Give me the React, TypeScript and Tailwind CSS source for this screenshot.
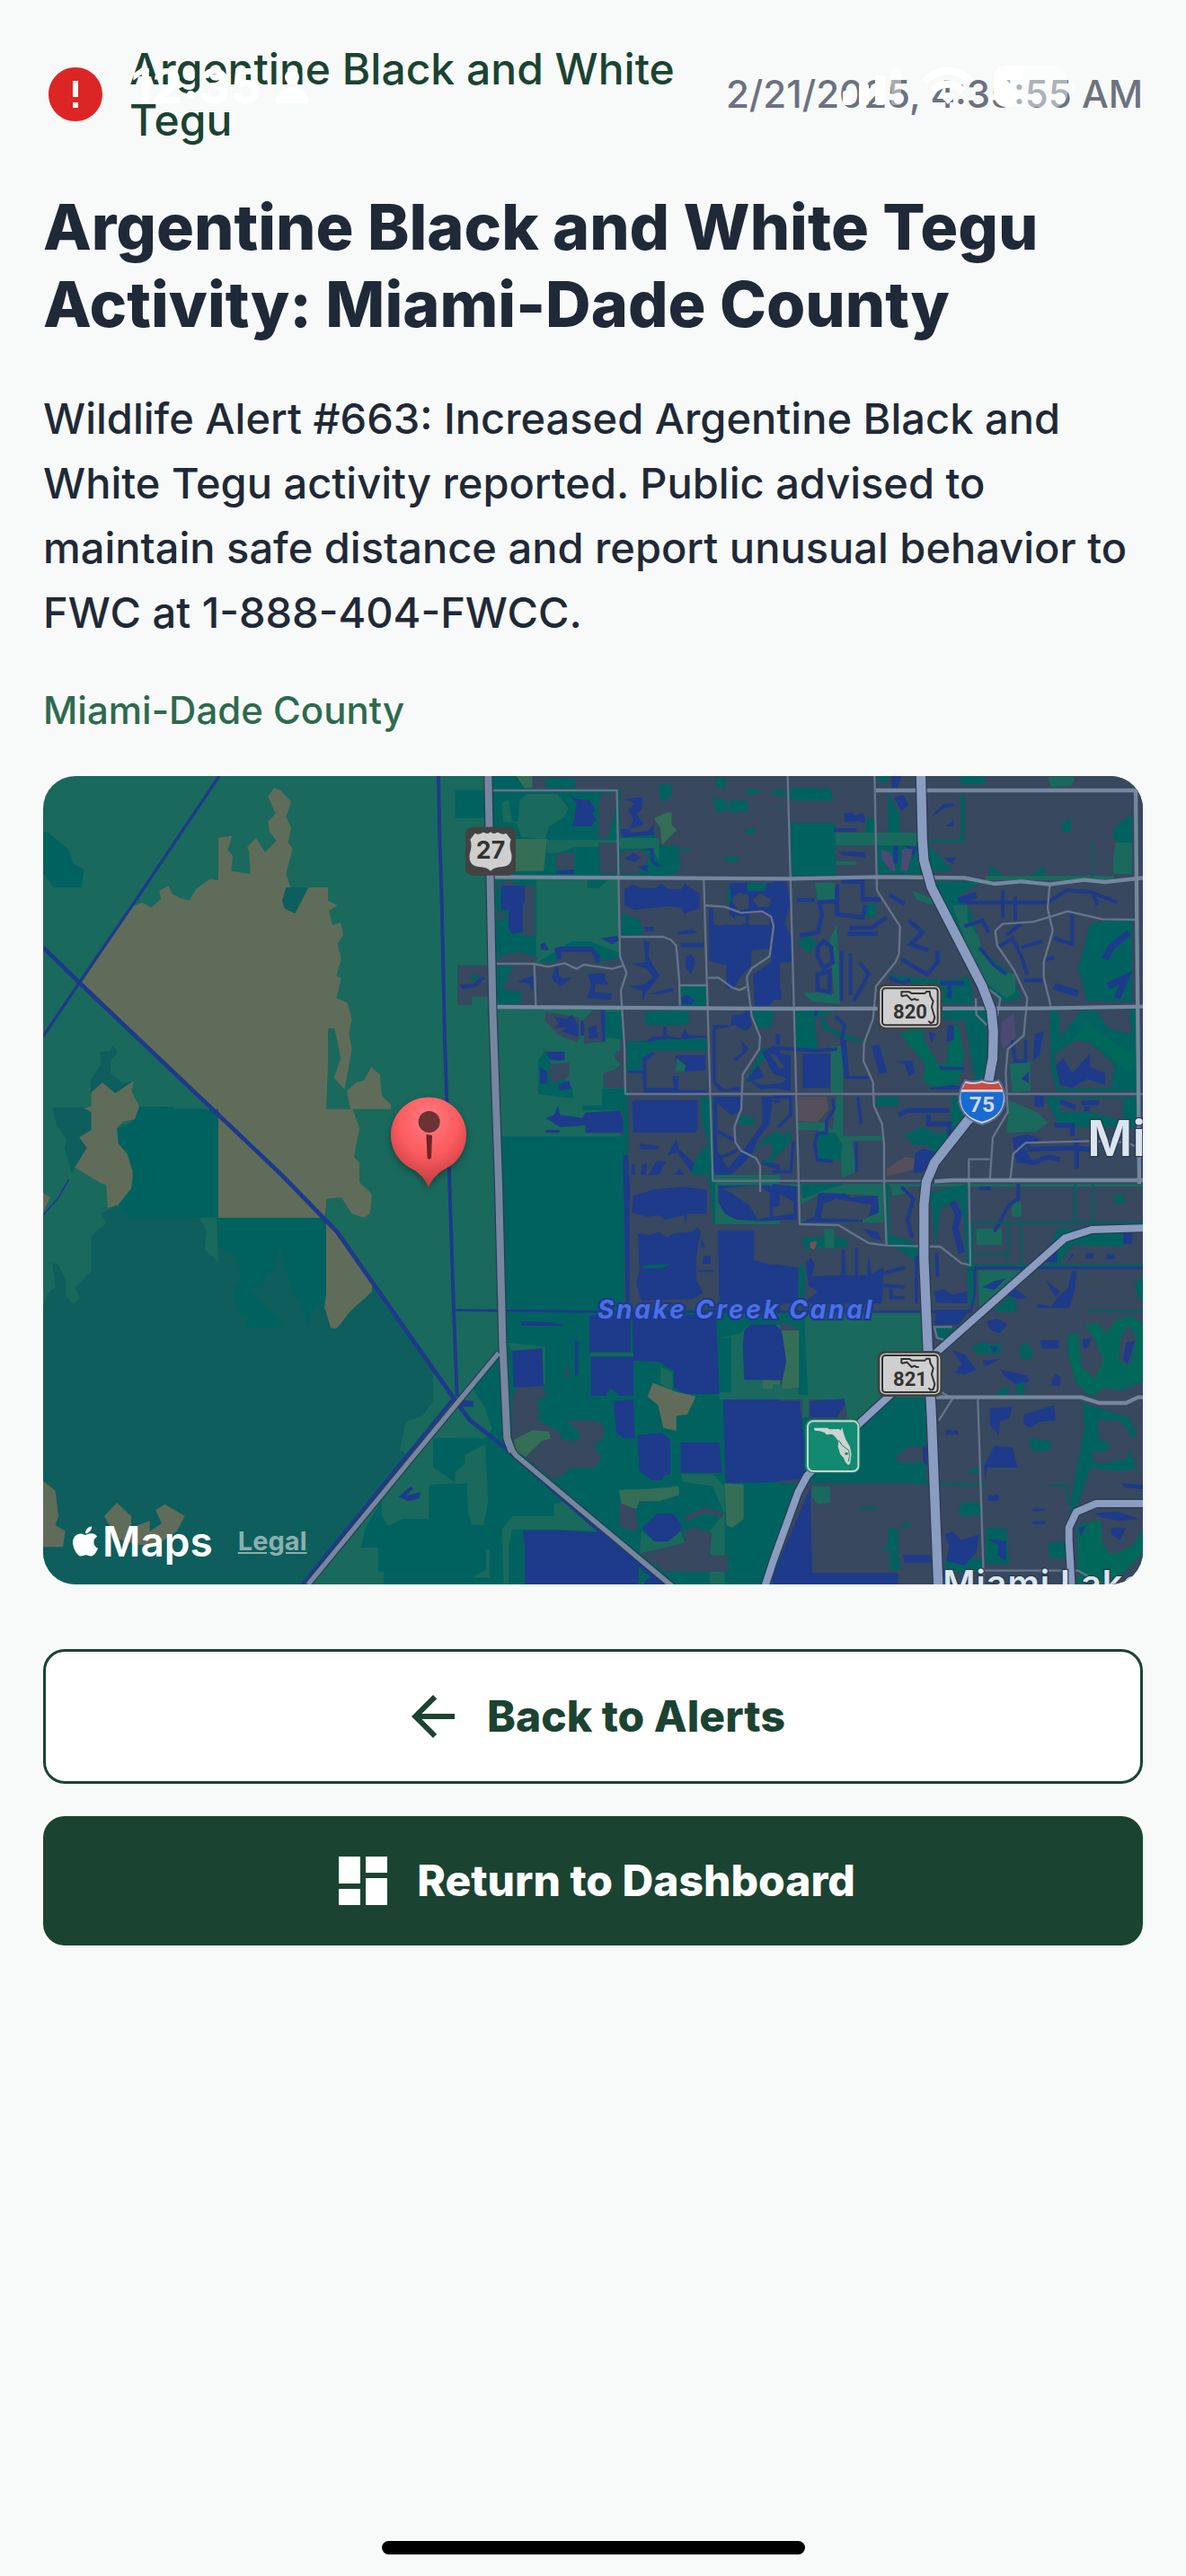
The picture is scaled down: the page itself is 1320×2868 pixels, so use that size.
import { FaApple } from 'react-icons/fa';
import { MdArrowBack, MdDashboard, MdError } from 'react-icons/md';

const alert = {
  species: 'Argentine Black and White Tegu',
  time: '2/21/2025, 4:35:55 AM',
  title: 'Argentine Black and White Tegu Activity: Miami-Dade County',
  message:
    'Wildlife Alert #663: Increased Argentine Black and White Tegu activity reported. Public advised to maintain safe distance and report unusual behavior to FWC at 1-888-404-FWCC.',
  county: 'Miami-Dade County',
};

// Land cover
const PARK = '#1a695d';
const TEAL = '#00625f';
const MARSH = '#0e5e5e';
const DRY = '#606c5a';
const CITY = '#37485f';
const WATER = '#1e3a8a';
const FIELD = '#356e57';
const GOLF = '#00685a';
const PURPLE = '#4c4a74';
const BROWN = '#554e5b';

// Roads
const CASING = '#2b3a50';
const MINOR = '#66738b';
const MAJOR = '#75879f';
const HIGHWAY = '#8a9cc0';

interface Tile {
  x: number;
  y: number;
  areas: [string, string][];
  lines?: [string, number, string][];
}

const tiles: Tile[] = [
  // north west
  {
    x: -24,
    y: -18,
    areas: [
      [DRY, 'M153 708 190 650 320 455 355 440 385 458 418 428 412 402 442 385 455 412 480 425 512 434 535 395 580 362 609 366V224L655 218 640 265 657 285 652 335 716 345 712 275 706 255 735 225 765 273 803 235 780 205 775 170 800 143 775 88 795 58 815 65 852 103 835 155 852 190 842 240 857 262 835 345 850 390H975V435L1007 450 978 468 990 515 1018 508 1026 550 1007 578 1019 630 1003 685 1019 695 1003 760 1040 775 1055 830 1045 880 1055 930 1030 1065 995 1025 1018 960 997 860H975V990L969 1130H1058L1080 1195 1062 1290 1080 1310V1380H609V1160L330 890Z'],
      [DRY, 'M1038 1070 1070 1040 1095 1035 1120 990 1148 1015 1155 1085 1185 1115V1130H1050Z'],
      [MARSH, 'M835 390H910L865 478 830 460 822 435Z'],
      [TEAL, 'M24 205H40L110 265 125 310 160 330 152 390H60L24 345Z'],
      [MARSH, 'M183 1075V1030L215 985V938H245L255 920 275 938 248 970 250 1010 290 1045 328 1035 300 1075Z'],
      [MARSH, 'M55 1125H185V1200L145 1225 170 1260 130 1325 120 1345 95 1260 105 1235 70 1185Z'],
      [TEAL, 'M340 1123H460V1130H609V1380H318L275 1245 270 1195 320 1175Z'],
      [DRY, 'M185 1075 222 1042 265 1078 328 1035 318 1070 345 1120 330 1165 290 1172 270 1195 275 1245 305 1280 323 1340 318 1380H220L130 1325 170 1260 145 1225 185 1200V1140L160 1127 185 1122Z'],
    ],
  },
  // south west
  {
    x: -24,
    y: 1332,
    areas: [
      [MARSH, 'M24 1368V440L40 395 65 375 55 295 75 300 100 355V405L125 432 147 410 130 378 185 320V205L235 160 218 130 265 105H290L305 143H969L1122 365 1326 640V755L1290 805 1235 825 1215 920 1240 935 895 1368Z'],
      [TEAL, 'M603 143H969V430L935 435 905 505 885 430 860 400 815 240 790 325 770 330 755 370 712 380 760 430 825 490 800 512H695L710 465 680 470 657 390 680 360V310L655 255 640 262 609 235Z'],
      [TEAL, 'M324 0H609V143H305L275 100 320 45Z'],
      [PARK, 'M545 143H603L609 290 563 250 570 190Z'],
      [DRY, 'M609 0H1080V25L1122 65 1115 130 1095 143 1055 130 1020 75 969 80V105L963 143H609Z'],
      [DRY, 'M969 143 1005 190 1122 365V390L1050 455 1005 512H985L963 440 969 400Z'],
      [DRY, 'M180 0H324L318 45 275 100 240 110 235 35Z'],
      [DRY, 'M24 60 48 75 24 125Z'],
      [DRY, 'M24 1022 65 1055 75 1140 65 1170 98 1190 90 1243H24Z'],
      [DRY, 'M228 1140 270 1095 318 1140V1180L380 1155V1190L420 1165 400 1120 430 1100 497 1140 470 1190 400 1240 340 1235 270 1215Z'],
      [PARK, 'M1240 935 1100 1100 1155 1085V1200L1000 1260 1060 1368H1326V880Z'],
      [TEAL, 'M1326 880H1400V1368H1162V1325H1143V1245H1085L1100 1180 1155 1085V1140L1175 1172 1225 1150H1314V1035L1400 1030 1326 975Z'],
      [WATER, 'M1210 1075 1250 1042 1260 1048 1235 1072 1283 1060 1280 1080 1245 1090Z'],
    ],
  },
  // north centre
  {
    x: 1236,
    y: -18,
    areas: [
      [CITY, 'M690 18H1260V1380H690Z'],
      [TEAL, 'M140 65H240V158H140Z'],
      [TEAL, 'M262 18H690V350H262Z'],
      [FIELD, 'M345 18H398V58H370Z'],
      [CITY, 'M398 18H690V62H398Z'],
      [TEAL, 'M442 58V25H540V60Z'],
      [PARK, 'M295 110 318 95 330 170 350 170 355 100 380 78H480L518 125 505 155 455 185 440 228 360 222 345 175 300 170Z'],
      [FIELD, 'M342 228H447L435 335H342Z'],
      [PARK, 'M447 232H690V255H540L480 275H447Z'],
      [CITY, 'M477 275H537V330H477Z'],
      [CITY, 'M618 105 630 75H680L675 130 650 225H618ZM618 240H680V345H625Z'],
      [WATER, 'M477 335 537 330V345H477Z'],
      [WATER, 'M522 80 545 95 590 100 607 130 597 145 610 160 597 185H530L540 150 545 110Z'],
      [TEAL, 'M690 225 800 195 825 250H888V335L855 350H690Z'],
      [PARK, 'M690 225H820V305L800 260H690Z'],
      [CITY, 'M692 270 760 262 790 290 750 345H692Z'],
      [WATER, 'M705 95 765 88 762 130 745 145 770 180 720 195 735 165 718 130 740 110ZM690 195H720L725 208 785 200 803 178V215L700 222Z'],
      [FIELD, 'M803 160 845 140H863L862 180 880 198 830 248 825 190Z'],
      [WATER, 'M705 295 735 275 760 290 740 305ZM765 262 803 258V300L828 318 815 322 795 305 792 268ZM750 320 785 315 780 340Z'],
      [TEAL, 'M820 45H862V80L840 100H822ZM1012 25H1042V60L1012 55ZM1000 90 1048 100V138H1012ZM1056 100H1116V138H1056ZM1110 63H1152V81H1110ZM1205 63H1260V81H1205ZM1110 192H1140V210H1112ZM1040 287H1085V303H1040ZM900 257H938L910 268H900ZM1212 118 1260 108V138Z'],
      [TEAL, 'M275 365H410V640H275ZM582 365H650L620 392H582ZM528 570H590L690 610V640H415L480 600Z'],
      [CITY, 'M275 385 320 365 348 385H405V550H365V390H275ZM282 465 315 490 282 500Z'],
      [WATER, 'M293 385H372V440L365 445V540L330 545 318 530V465H293Z'],
      [CITY, 'M290 620 350 605 418 625 400 645 480 640 490 605 590 600 615 640 690 625V785H275V645Z'],
      [TEAL, 'M278 650H335L298 730 360 740V780H275Z'],
      [WATER, 'M470 595 490 588H595L622 615V640H610L595 605H495V630H482ZM625 560 680 552 690 565 665 580ZM425 580 437 573 453 600 427 598Z'],
      [WATER, 'M462 690 475 655 485 660V680L500 695 530 690 495 720 470 705ZM582 680 640 675V700L655 715 610 712 605 740 665 745 660 765 580 760 595 715ZM345 705 400 685V740L385 710Z'],
      [CITY, 'M148 650H250V755H195V783H148Z'],
      [TEAL, 'M190 682H215V700H195Z'],
      [WATER, 'M155 715 200 712 230 685 237 695 210 722 165 730Z'],
      [WATER, 'M705 395 735 380 755 392H810L828 378 850 395H895L905 378 955 410V460L905 478 895 458 850 452 740 465 705 450Z'],
      [TEAL, 'M695 475 758 500 765 550H695ZM893 720H978V785H893ZM775 805 920 800V850H775Z'],
      [WATER, 'M770 522H803V536H775ZM878 540 930 530 950 542 890 548ZM893 575H970V590H893ZM910 620 930 612 942 640 928 680 910 660Z'],
      [WATER, 'M770 565 788 575 785 620 800 650 822 685 775 745 765 770V735L720 720 770 715 800 690 780 662 730 645 775 640ZM790 745 865 725 870 735 820 748ZM895 755 915 750 940 768 930 780H898Z'],
      [WATER, 'M988 455 1000 460 1005 515H1190V595L1130 600 1128 650 1090 690 1070 728H1045V650L988 635Z'],
      [WATER, 'M1055 375H1260V640H1195L1190 490 1165 475H1120V520H1105L1055 480Z'],
      [CITY, 'M1062 430 1085 408 1120 415V460L1085 470ZM1133 430 1160 410 1195 430 1190 455 1150 455ZM1008 470 1050 462 1056 510 1020 520ZM1073 485H1110V510L1085 515ZM1128 480H1160L1155 510 1130 512Z'],
      [TEAL, 'M1115 375H1180L1175 402H1115ZM1050 395H1060V440H1045Z'],
      [WATER, 'M1135 680 1200 635H1260V735H1225L1190 785H1140Z'],
      [CITY, 'M440 805 500 815 555 825V895L545 908 480 880 440 835ZM570 830 600 800H640V905L570 912Z'],
      [WATER, 'M470 820 510 830 530 815 550 850V890L495 870 520 855 470 860 485 845ZM558 835H570V885H558ZM585 860 610 850 618 890 585 895ZM625 800H641V905H630Z'],
      [TEAL, 'M641 805H697L705 900 641 890ZM417 965 440 935 460 980 530 1060 533 1095 417 1080Z'],
      [CITY, 'M455 980 520 975V1020L470 1045 455 1020ZM635 1010 670 1000 695 980 670 960 680 935 705 940V1060H635Z'],
      [WATER, 'M440 938H505V968H475L455 965ZM423 990 447 1005V1045H423ZM485 1050 520 1035 528 1062 488 1068Z'],
      [TEAL, 'M565 1118H630V1062H718V1225H700V1135H565ZM295 1222H718V1380H297Z'],
      [WATER, 'M442 1160 470 1150 483 1118 490 1150 565 1160 575 1142 690 1135 700 1170V1210H575V1185L490 1190ZM442 1200H488V1210H442Z'],
      [TEAL, 'M712 905 800 900 880 895H980V935H800L765 960 760 1005H712Z'],
      [WATER, 'M712 903H780L800 888H835V855H845V885L895 893 905 860 920 885H978V892L880 898 845 895 790 905Z'],
      [WATER, 'M765 960 800 938 805 948 778 970V1060H870L865 1020H885V1065L980 1068V1078H770L765 1010H718V1002H765ZM875 950H975V1000L905 1005 880 990Z'],
      [PARK, 'M880 960 910 985 905 1005 875 1005Z'],
      [WATER, 'M730 1105 740 1100H950V1200L940 1208H735Z'],
      [TEAL, 'M958 1090H1000V1380H920L940 1300 985 1245 962 1170Z'],
      [WATER, 'M755 1245 820 1255 815 1265H760ZM848 1285 878 1230 888 1265 938 1310 930 1340 880 1275ZM702 1285H718V1380H700ZM730 1315H740V1370H755L765 1315 780 1312 775 1370 810 1305 845 1305 800 1380H725ZM840 1380 890 1330 920 1370 900 1380Z'],
      [TEAL, 'M1130 800H1205L1195 855 1150 860ZM1110 1040 1165 925 1200 935 1150 990Z'],
      [WATER, 'M1000 850 1060 850 1065 815H1090L1120 800 1130 850 1110 870 1075 850 1010 865V1040L1040 1065 1090 1055V1070H1020L1000 1040ZM1065 965 1100 940 1095 900 1120 930 1080 970Z'],
      [WATER, 'M1165 940 1200 920 1260 940V950L1190 945 1225 1000 1260 1010V1030L1200 1010ZM1115 1030 1165 1050 1260 1040V1055L1160 1065ZM1210 880H1260V915H1210ZM1110 1040 1150 985 1170 1020 1155 1030Z'],
      [WATER, 'M1003 1090H1095L1090 1140 1060 1150 1015 1110V1270L1065 1350H1150L1260 1355V1365H1010L1003 1330ZM1165 1090H1200L1190 1180 1150 1230 1130 1285 1060 1350 1050 1330 1100 1270 1165 1180Z'],
      [WATER, 'M1020 1200 1075 1230 1070 1240 1015 1210ZM1020 1290 1080 1262 1085 1272 1020 1300ZM1195 1100H1260V1110H1205ZM1170 1300 1230 1320 1225 1335 1165 1315Z'],
      [TEAL, 'M1085 1150 1138 1160V1185H1090ZM1130 1280 1170 1230 1260 1180V1240L1190 1310H1165L1240 1250 1170 1245Z'],
    ],
  },
  // south centre
  {
    x: 1236,
    y: 1332,
    areas: [
      [TEAL, 'M295 0H1260V1368H0V1150H52V1040L180 1030 183 1120 195 1170 235 1170 250 1090 240 900 172 935V965L120 1008 66 970V880H240L150 770 280 605 290 600Z'],
      [PARK, 'M150 770 190 700 240 780 262 850 240 880Z'],
      [MARSH, 'M0 545 66 640V755L30 805 0 815Z'],
      [CITY, 'M705 0H985L1003 165H1260V310H1140V290H1025V450H705Z'],
      [WATER, 'M702 0H722V450H710ZM735 70 800 50 900 40 980 50V130H915L910 165 905 135 840 150 820 135 780 140 730 125Z'],
      [WATER, 'M750 195 790 200 820 190 845 210 870 195 930 190 950 175 960 190 945 270V350L968 395 930 415 760 420 745 360 755 320ZM960 210 975 240 962 245ZM970 270H992V298H965ZM950 319H1005V325H950Z'],
      [TEAL, 'M765 302 860 298 830 312H770Z'],
      [PARK, 'M1008 0H1260V165H1008Z'],
      [WATER, 'M1018 35H1260V150L1170 155 1080 150 1040 130 1018 90Z'],
      [CITY, 'M1030 45 1150 35 1190 60V140L1150 150 1120 100 1060 60ZM1215 40H1260V85L1225 70ZM1200 110 1260 90V150H1200Z'],
      [WATER, 'M1017 185H1138V285L1215 305H1260V452H1022Z'],
      [WATER, 'M588 470 725 465V592H588ZM730 460 1010 470 1018 640 1022 732H910L870 710V655L820 625 735 620ZM593 608H735V738H690L655 712 645 738H593ZM668 755 735 750 740 880H700L678 860Z'],
      [PARK, 'M593 595H735V605H593ZM825 640 865 660V720L825 700Z'],
      [WATER, 'M748 870 830 862 858 885V1000L835 1005 830 1020H795L755 990ZM893 893H1022L1030 995H893Z'],
      [PARK, 'M1022 545 1090 530 1120 500H1260V750H1022V727H1062V545Z'],
      [FIELD, 'M1227 520H1260V715H1167V686H1235L1245 630Z'],
      [WATER, 'M1035 750H1260V1022L1165 1028H1042ZM1100 570 1105 520 1125 500H1210L1227 520 1245 630 1235 685H1105Z'],
      [DRY, 'M782 740 800 695 880 725 943 740 915 800 878 805V855L835 845 818 770Z'],
      [PARK, 'M315 560 440 575V700H430V580L330 588Z'],
      [WATER, 'M330 588 430 580 435 705 400 718 336 710ZM360 490 450 492 500 500V505L360 503ZM540 555H550V670H540Z'],
      [CITY, 'M508 640H520V675H508Z'],
      [CITY, 'M330 740 345 710 430 705 447 740 415 750 420 820 490 860 495 885 550 888 555 860 510 820 610 820 640 845 630 885 605 900 628 950 605 978H530L470 1020 375 945 330 880Z'],
      [FIELD, 'M335 885 400 852 455 858 458 883 430 888 375 942 345 925Z'],
      [PARK, 'M330 1140H470V1100L520 1085 620 1190 490 1185H330L318 1240V1368H302L295 1185ZM195 1345 242 1320V1250H255V1345Z'],
      [WATER, 'M366 1187H490L620 1195 752 1305V1368H372V1240Z'],
      [FIELD, 'M687 1052 775 1050 887 1040V1070L820 1090H755L745 1115H697Z'],
      [CITY, 'M687 1095 740 1115 752 1180 735 1192 690 1175Z'],
      [PARK, 'M895 1000H1000L1040 1040V1368H990V1190L1038 1130 1000 1040 900 1025ZM763 1190 805 1225 893 1190 905 1230 755 1265Z'],
      [WATER, 'M763 1180 815 1132H870L893 1165V1190L850 1225H805Z'],
      [CITY, 'M755 1265 905 1230V1185L940 1178 998 1195 990 1270 1050 1272V1325H840ZM905 1140 975 1110 1038 1130 1030 1145 975 1130 915 1158Z'],
      [FIELD, 'M1040 1030 1103 1035V1150L1065 1178 1045 1170Z'],
      [WATER, 'M1200 1368 1260 1200V1368ZM775 1355 795 1345 830 1368H770ZM130 750 200 755V775H150Z'],
    ],
  },
  // north east
  {
    x: 2436,
    y: -18,
    areas: [
      [CITY, 'M24 18H1240V1380H24Z'],
      [TEAL, 'M60 175H210V350H62ZM55 58H190L203 100H58ZM0 65H45V82H0ZM345 18H395L370 45ZM310 160H345V210H310ZM385 70 410 120 425 150V210H385ZM350 240H490L500 345H350ZM505 230 600 335H530ZM525 230H628V80H640V240H525ZM628 18H708V46H628Z'],
      [PARK, 'M210 207H480V250H210ZM210 303H280V315H210ZM918 20H1008L1000 50 930 55ZM710 352H1140V366H710Z'],
      [WATER, 'M238 143 260 140 275 150 300 142 310 160 305 175 285 168 240 172ZM205 192H280V204H205ZM220 270 310 272V290L230 282ZM403 250H418V310H403ZM435 250 485 255 470 290 455 262ZM398 18H430L415 60H398ZM405 90 435 80 455 115 430 135Z'],
      [PURPLE, 'M362 262 395 275 412 335H395L365 295ZM432 262H468L450 335 427 330Z'],
      [WATER, 'M532 150 570 112 605 108V117L570 125 540 150ZM578 185 605 165V188ZM570 290 612 292 600 312Z'],
      [TEAL, 'M965 180 995 155V205H968ZM1137 225 1140 190 1200 145V240L1155 240ZM1065 240H1070V355H1065ZM725 315 770 350H725ZM860 350 908 318V350Z'],
      [PARK, 'M1145 240H1200V345H1137V300Z'],
      [WATER, 'M0 370H45L60 440 40 510 65 560V640H0ZM0 730H28V765H0Z'],
      [TEAL, 'M540 370H700L620 420 660 470 700 600 800 680 830 760 760 775 700 700 600 500ZM1060 510 1200 490V770H1050L1020 660ZM80 575 120 550 150 575 120 610ZM300 450 345 440V490H310ZM380 680 560 700 660 690 670 780H570L440 720Z'],
      [PARK, 'M600 450H650V500L690 560 700 600 760 670 810 680V740L780 760 700 700 640 560ZM140 375H210V430L150 435ZM190 560 215 515 225 780 130 770 100 740 205 745ZM465 400 540 430 530 450 480 430Z'],
      [TEAL, 'M70 800H210L140 830 150 930H72ZM160 805 190 860 240 880 300 900V910L230 895 165 860ZM345 800H715V1060H680L640 830 430 870Z'],
      [CITY, 'M430 830 600 830 610 1040 480 1060 410 960Z'],
      [GOLF, 'M425 880 500 850 505 900 540 960 600 900 605 850H620L640 950 620 1050 550 1060 500 1040 510 980Z'],
      [CITY, 'M545 900 585 920 580 980 545 980Z'],
      [PARK, 'M195 920H235V1080H195Z'],
      [WATER, 'M100 945H192V1055L185 1060H100ZM225 900H245L255 1020H320V1030H240ZM330 920 355 915 382 1010H355ZM410 970H465L475 1010 455 1020 440 980ZM520 1060 600 1050 680 1065H530ZM555 985 580 990H640V1000H560ZM520 870 545 880 530 910ZM585 850H605V900L580 905ZM0 940 60 950V1070L0 1060 50 1030 0 1010 40 990Z'],
      [PARK, 'M790 980 860 970V1070L800 1075Z'],
      [PURPLE, 'M765 840 805 810 812 890 770 930 762 900Z'],
      [TEAL, 'M925 800H1225V1070H950L930 1000Z'],
      [CITY, 'M955 800H1030L960 890ZM1080 800H1190L1200 880 1120 860Z'],
      [GOLF, 'M970 930 1030 870 1040 820 1060 850 1130 900 1210 950 1200 1010 1160 990 1060 890Z'],
      [CITY, 'M940 950 1010 900 1060 910 1140 980 1130 1060H960Z'],
      [WATER, 'M945 985 970 960 1000 1010 1060 945V990L1110 1010V1050L1050 1030 1000 1060 960 1050ZM875 880 905 870 890 950 870 970ZM830 1030 855 1005V1045Z'],
      [PARK, 'M85 1175H170L200 1200 215 1085H235V1220H370V1235H265L280 1340 230 1360 225 1250 150 1200H85Z'],
      [BROWN, 'M85 1088H180L187 1130 150 1175 85 1170Z'],
      [TEAL, 'M150 1210H210L232 1250 225 1300H150ZM345 1090H420V1120H345ZM600 1085 640 1100V1180L540 1290 510 1230 590 1200ZM440 1215 500 1190 560 1220 550 1250H470ZM910 1090H1225V1190H960ZM0 1240 60 1200V1240L0 1300Z'],
      [CITY, 'M960 1095H1170V1170L1060 1140H960Z'],
      [PARK, 'M790 1100 880 1140 920 1175 880 1205 780 1210Z'],
      [BROWN, 'M380 1330 440 1290 475 1295V1330L380 1355Z'],
      [WATER, 'M475 1280 500 1262 570 1280 500 1340 470 1345ZM800 1225 850 1215 900 1230 840 1260 870 1310 815 1310ZM875 1085H905V1123H875Z'],
    ],
    lines: [
      [WATER, 14, 'M80 432H140M155 440 165 480 150 540 90 550M215 380V480L300 490 310 450M230 370H300V430H360M150 440 220 435M250 545H350M255 525H330L380 490M390 415 440 445M455 500 500 540 460 580 520 600M430 630 480 660 515 680 550 640V600M390 690 430 710 460 700M560 710H640M590 710V760M150 590 170 570 195 590 200 640 170 660 150 620ZM150 680 190 670V740L150 730Z'],
      [WATER, 12, 'M230 600V770M260 610V750M290 640 320 680 270 770M640 440H920M768 400V490M810 420V500M920 440 980 400 1060 405 1150 440M1070 410 1085 450M1000 470V580L940 560M780 550 830 510M640 520 700 500 720 540M750 590 800 560 830 620 850 680M690 590 740 650 780 680M830 590 900 570M910 630 940 625M840 700H900'],
      [WATER, 22, 'M620 435 680 415M1110 630 1130 590 1190 540M940 720 1020 745M1120 720 1180 690 1150 760'],
      [WATER, 11, 'M0 925 140 935 215 930M150 800 140 820M210 820 240 850 230 900M800 900 810 970H845V900M200 1095 205 1130 180 1170V1210H150L140 1250 150 1300 200 1305M285 1090 295 1180M280 1240V1340M0 1090H60V1150L20 1190M0 1340H60L70 1240'],
      [WATER, 16, 'M420 1150 450 1135H590M520 1150V1180H590V1220M960 1105 1010 1125M1030 1110H1090M1040 1130H1060M940 1185H1000V1220M850 1265 1010 1260 1080 1270M1015 1230V1330M830 1300 870 1310 920 1290 960 1300'],
    ],
  },
  // south east
  {
    x: 2436,
    y: 1332,
    areas: [
      [CITY, 'M24 40H1240V1368H24Z'],
      [PARK, 'M105 455H495L540 590V745H380L290 815H250L240 750H120V810H100V750H0V700H100Z'],
      [TEAL, 'M0 452H105L118 735H85L88 520 60 500 0 490ZM100 810 290 840 405 745H512V1030H0V1368L90 1030Z'],
      [FIELD, 'M27 520H88V710L32 715V685L45 630Z'],
      [WATER, 'M0 500 30 520 45 620 32 685H0ZM0 755H90L105 890V1015L0 1025ZM125 755 240 748V770L215 810H125ZM0 1340 125 1045 132 1330H418V1368H0Z'],
      [PARK, 'M132 1040H192V1095L150 1100 130 1075Z'],
      [CITY, 'M415 940 450 908 510 905V960H415Z'],
      [PARK, 'M95 30H370V160H95ZM395 30H440L460 60 400 70Z'],
      [TEAL, 'M95 30H240L150 60 100 80ZM375 30H390V200L460 220 490 250V300L440 260 380 230ZM525 60 650 30V200L620 80 560 110 545 240ZM640 170 670 160V440H655Z'],
      [CITY, 'M95 100 160 60 350 70 355 125 300 150H95Z'],
      [WATER, 'M155 60 240 62 260 75 350 70 355 125 320 140 330 100 210 80 170 95 160 145 300 150V158H95L140 140ZM0 30 80 40V150H0V140L70 130V90L0 50ZM300 180 350 190 365 220 330 210Z'],
      [TEAL, 'M95 210 200 205 250 215V240L110 250ZM90 290 110 320 105 440H85Z'],
      [PARK, 'M170 180H205V245H175Z'],
      ['#7a4f5b', 'M125 225 148 222 140 250 125 245Z'],
      [WATER, 'M110 290 130 275 140 300 130 340 230 335V250H240L245 335H275V245H285V335H315L320 265 330 330 370 310 365 430H100L150 390 120 370ZM0 298 85 310V430H0Z'],
      [WATER, 'M540 390 570 382 600 400 650 390V430L590 428 545 425ZM545 450H660L620 500H540Z'],
      [TEAL, 'M540 510H610L560 560ZM735 455 790 405 812 420V458ZM955 175 1100 190H1170V240L1000 235 955 300 900 290ZM1140 65H1173V95H1140ZM1210 360 1240 340V430L1215 400Z'],
      [PARK, 'M685 320H840L690 445ZM680 180H765V235H680ZM795 90H830V140H800Z'],
      [WATER, 'M700 375 740 355 780 345 740 385ZM1170 195H1200V232H1172ZM900 290 950 250V293ZM1045 262H1070V280H1045ZM1115 265H1142V282H1115ZM980 295 1000 262 1005 270Z'],
      [WATER, 'M880 430 930 440 960 400 985 380 1000 320H1015L1010 380 990 445H885ZM910 350 960 390 945 410ZM780 400 810 380 850 410 820 415Z'],
      [WATER, 'M715 490 750 480 785 500 755 530 725 515ZM600 585 640 600 680 650 640 668 610 660 630 630ZM700 620 760 615 710 640ZM760 650 850 670 855 690 820 705 770 670ZM892 552H955V580H900ZM930 690 945 665 960 675V705H932ZM1035 550 1065 545 1050 580H1038Z'],
      [TEAL, 'M665 575 690 562 760 565V598H680ZM825 570 845 560 865 580V615H828ZM750 720 790 705 785 735H752ZM810 700 840 690V735H815Z'],
      [GOLF, 'M1040 500 1085 495 1110 530 1150 480 1200 470 1240 500V690L1160 720 1110 710 1060 740 1010 690 985 590V530H1020L1030 640 1075 680 1105 620 1070 540Z'],
      [CITY, 'M1160 550 1190 500 1215 550 1190 640 1155 620Z'],
      [WATER, 'M1170 620 1180 560 1210 555 1185 630ZM725 570 750 575 740 595Z'],
      [TEAL, 'M1035 760 1060 770 1190 810 1215 870 1200 880 1160 820 1085 820 1090 880 1125 900 1120 920 1060 930 1080 965 1180 950 1190 920 1215 980 1160 990 1060 980 1020 1100 990 1130 1005 1030 1040 850Z'],
      [WATER, 'M725 780 800 775 790 815 760 820 755 870 725 835ZM840 800 905 780 940 770 945 820 890 825 860 845 838 830ZM575 852 620 855V868H580ZM705 975 740 905 800 910 818 978H715L710 1020ZM720 1070 755 1068V1088H718ZM500 910 515 905V970L503 960Z'],
      [TEAL, 'M855 880 935 890 920 925 865 920ZM655 980H695V996H655ZM630 1095H695V1138H620ZM710 1180H780L790 1300H712ZM385 1180H420V1245L425 1320H390V1255L350 1250 385 1240ZM430 1175 445 1157 460 1165 440 1180ZM918 1230 985 1225V1280H925ZM290 1108H345V1117H290ZM575 1280H700V1330H575Z'],
      [WATER, 'M575 1200 600 1190 630 1220 690 1200 680 1260 640 1305 580 1290 590 1240ZM715 1215 780 1225 778 1290 750 1270 755 1240ZM435 1270H525L530 1295H440ZM868 1115H910L905 1123H868ZM868 1157H910V1167H868ZM1160 1030 1240 1035V1050L1180 1045Z'],
      [GOLF, 'M1015 1170 1080 1155H1095L1100 1230 1130 1270 1200 1240 1240 1180V1260L1190 1310 1130 1368H1020Z'],
      [WATER, 'M1075 1130 1150 1125 1225 1150 1160 1155 1100 1145ZM1130 1180H1180L1160 1220 1130 1200ZM1020 1180 1045 1170 1030 1210Z'],
    ],
    lines: [
      [WATER, 12, 'M370 330 440 310M370 370 440 375M395 380V410H440M430 40 470 80 450 150 465 210M480 270V430M690 45H730M820 30V80L790 100 740 190M548 260 550 340'],
      [WATER, 22, 'M600 90 620 130 610 180 632 260'],
      [TEAL, 7, 'M785 160V290M1010 30V160M1068 30V160M670 160H1240M675 265H790M830 165V300M670 302H1240M1055 455H1240M480 1030 710 1035M925 1037H985V1100'],
    ],
  },
];

const canals: [number, string][] = [
  [10, 'M588 0 301 427 121 690 0 870'],
  [14, 'M0 572 121 690 796 1332 981 1522 1356 2057 1376 2087 1426 2152 1550 2250 1856 2520 2080 2710'],
  [12, 'M1320 0 1324 205 1331 420 1341 882 1356 1332 1371 1782 1382 2072'],
  [12, 'M1366 2084 866 2700'],
  [8, 'M1376 1784 1856 1789H3096L3111 1732V1643H3672'],
  [5, 'M86 1347 50 1410 0 1467'],
];

const minorRoads = [
  'M1498 48H1916L1926 602 1948 657 1929 717 1941 902 1944 1062H3672',
  'M2206 347 2236 1352H2936',
  'M2486 0 2522 1330 2526 1497 2656 1500 2756 1560 2816 1568 2996 1572 3066 1627 3096 1634 3091 1332V1280H3160',
  'M2776 0 2784 382 2861 502 2858 592 2846 622 2781 702 2771 812 2741 892 2739 952 2771 1022 2774 1102 2801 1162 2808 1232V1362L2816 1568',
  'M2211 432 2276 437 2331 457 2401 452 2431 470 2439 502 2426 602 2366 642 2349 672 2366 802 2394 872 2391 912 2336 997 2331 1112 2308 1172 2311 1222 2331 1252 2381 1277 2394 1302V1390',
  'M2221 674H2256L2301 707 2326 715 2349 704',
  'M1929 537H2071L2096 547 2114 567 2124 682 2126 767M2126 699H2214',
  'M1514 627H1636L1686 637 1741 625 1781 644 1806 630 1901 644 1941 632M1640 627 1645 765',
  'M3656 480 3536 478 3421 452 3306 487 3204 494 3179 517 3186 567 3241 647 3286 742 3274 867 3221 912 3214 992 3221 1122 3171 1207 3161 1350',
  'M3361 362 3354 442 3371 517 3341 622V672L3364 767',
  'M3229 1352 3239 1262 3281 1225 3496 1219 3620 1224 3672 1250',
  'M3151 707 3196 742 3186 802M3114 742 3116 797 3151 832',
  'M3121 2082 3141 2700M3141 2654H3456L3496 2677',
  'M3036 1840H2976L2984 1876 3010 1884M2996 2056 3036 2080 2991 2152',
];

const majorRoads = [
  'M1486 337 2496 343 2786 337 3076 340 3176 360 3266 352 3361 362 3476 347 3546 354 3672 340',
  'M1501 771 2436 777 3336 776 3672 770',
  'M2781 48H3672',
  'M3648 42 3660 1362',
  'M2976 1354 3036 1350H3672',
  'M2980 2075H3466L3526 2094H3616L3656 2075H3672',
];

const highways: [string, number, string][] = [
  [MAJOR, 16, 'M1521 1927 1236 2272 885 2700'],
  [MAJOR, 17, 'M1556 2240 1580 2270 2105 2710'],
  [MAJOR, 24, 'M1486 0 1501 772 1521 1362 1534 1892 1549 2212 1566 2257'],
  [HIGHWAY, 24, 'M3672 1510 3501 1515 3411 1544 2986 1922 2726 2162 2551 2337 2521 2392 2436 2627 2409 2710'],
  [HIGHWAY, 24, 'M3672 2430H3516L3450 2458 3425 2510V2550L3434 2710'],
  [HIGHWAY, 31, 'M2931 0 2936 212 2941 282 2966 372 3136 702 3166 782 3173 852 3171 942 3158 1012 3140 1100 3086 1152 2976 1292 2949 1355 2941 1432V1612L2954 1912 2966 2132 2989 2710'],
];

function StateShield({ x, y, route }: { x: number; y: number; route: string }) {
  return (
    <g transform={`translate(${x} ${y})`}>
      <rect width="217" height="153" rx="24" fill="#424242" />
      <rect x="8" y="8" width="201" height="137" rx="18" fill="#cfcfcf" />
      <rect x="16" y="15" width="185" height="123" rx="10" fill="none" stroke="#333" strokeWidth="6" />
      <path
        d="M80 42V27H106L114 32H158L164 26H174L176 40 186 58 181 78 191 112 186 128 178 131 170 124M80 42 98 38 114 54 124 50 130 54 138 54"
        fill="none"
        stroke="#333"
        strokeWidth="6"
      />
      <text x="109" y="117" textAnchor="middle" fontSize="66" fontWeight="700" fill="#333" className="font-[Roboto]">
        {route}
      </text>
    </g>
  );
}

function AlertMap() {
  return (
    <svg
      viewBox="0 0 3672 2700"
      preserveAspectRatio="xMidYMid slice"
      className="block h-full w-full font-[Inter,sans-serif]"
      role="img"
      aria-label={`Map of ${alert.county}`}
    >
      <defs>
        <radialGradient id="pin" cx="0.5" cy="0.25" r="0.8">
          <stop offset="0" stopColor="#ff7c80" />
          <stop offset="0.5" stopColor="#fb5b5f" />
          <stop offset="1" stopColor="#b8333a" />
        </radialGradient>
        <filter id="pinShadow" x="-30%" y="-30%" width="160%" height="160%">
          <feDropShadow dx="0" dy="10" stdDeviation="12" floodOpacity="0.35" />
        </filter>
      </defs>

      <rect width="3672" height="2700" fill={PARK} />

      {tiles.map((tile) => (
        <g key={`${tile.x},${tile.y}`} transform={`translate(${tile.x} ${tile.y})`}>
          {tile.areas.map(([fill, d]) => (
            <path key={d} d={d} fill={fill} />
          ))}
          {tile.lines?.map(([stroke, width, d]) => (
            <path key={d} d={d} fill="none" stroke={stroke} strokeWidth={width} />
          ))}
        </g>
      ))}

      <g fill="none" stroke={WATER}>
        {canals.map(([width, d]) => (
          <path key={d} d={d} strokeWidth={width} />
        ))}
      </g>

      <g fill="none" strokeLinejoin="round">
        {minorRoads.map((d) => (
          <path key={d} d={d} stroke={MINOR} strokeWidth="7" />
        ))}
        {majorRoads.map((d) => (
          <path key={d} d={d} stroke={MAJOR} strokeWidth="13" />
        ))}
        {highways.map(([, width, d]) => (
          <path key={d} d={d} stroke={CASING} strokeWidth={width + 7} />
        ))}
        {highways.map(([stroke, width, d]) => (
          <path key={d} d={d} stroke={stroke} strokeWidth={width} />
        ))}
      </g>

      {/* US 27 */}
      <g transform="translate(1410 170)">
        <rect width="168" height="162" rx="24" fill="#424242" />
        <path
          d="M32 21Q45 28 57 19L62 18Q74 26 84 17Q94 26 106 18L111 19Q123 28 136 21L152 42Q144 60 154 92Q158 130 124 133Q96 134 84 147Q72 134 44 133Q10 130 14 92Q24 60 16 42Z"
          fill="#cfcfcf"
        />
        <text x="84" y="107" textAnchor="middle" fontSize="80" fontWeight="700" fill="#333">
          27
        </text>
      </g>

      <StateShield x={2786} y={694} route="820" />
      <StateShield x={2786} y={1920} route="821" />

      {/* Interstate 75 */}
      <g transform="translate(3059 1012)">
        <path
          d="M20 4Q48 14 76 3Q104 14 132 4Q156 40 153 76Q142 134 76 152Q10 134 -1 76Q-4 40 20 4Z"
          fill="#d5d5dc"
          stroke="#5f6b8c"
          strokeWidth="6"
        />
        <path d="M21 13Q50 22 76 12Q102 22 131 13L143 35H9Z" fill="#c94a43" />
        <path d="M6 43H146Q158 122 76 142Q-6 122 6 43Z" fill="#186bd2" />
        <text x="76" y="109" textAnchor="middle" fontSize="74" fontWeight="700" fill="#d5d5dc" className="font-[Roboto]">
          75
        </text>
      </g>

      {/* Florida's Turnpike */}
      <g transform="translate(2544 2148)">
        <rect width="184" height="180" rx="26" fill="#118a71" />
        <rect x="9" y="7" width="169" height="167" rx="18" fill="none" stroke="#c9d3cf" strokeWidth="6" />
        <path
          d="M30 29H76L80 34 114 33 118 38 124 28 129 48 136 68 150 92 155 118 150 150 144 153 135 144 128 128 118 118 110 92 112 74 98 56 90 50 72 52 64 44 48 40 32 38Z"
          fill="#cfd2d0"
        />
        <path d="M112 70Q120 90 146 104Q152 126 144 142" fill="none" stroke="#118a71" strokeWidth="3" />
        <circle cx="138" cy="115" r="5" fill="#118a71" />
      </g>

      <text
        x="1851"
        y="1812"
        fontSize="84"
        fontWeight="700"
        fontStyle="italic"
        fill="#4a6fe8"
        stroke={WATER}
        strokeWidth="14"
        paintOrder="stroke"
        className="tracking-widest"
      >
        Snake Creek Canal
      </text>
      <g fill="#dbe5f0" stroke={CASING} strokeWidth="8" fontWeight="600" paintOrder="stroke">
        <text x="3486" y="1270" fontSize="164">
          Mi
        </text>
        <text x="3004" y="2740" fontSize="118" className="tracking-wide">
          Miami Lakes
        </text>
      </g>

      <g filter="url(#pinShadow)">
        <path
          d="M1287 1373Q1272 1336 1240 1316A126 126 0 1 1 1334 1316Q1302 1336 1287 1373Z"
          fill="url(#pin)"
        />
      </g>
      <circle cx="1289" cy="1155" r="36" fill="#6d3236" />
      <path d="M1279 1197 1299 1200 1296 1276Q1289 1284 1283 1276Z" fill="#6d2428" />
    </svg>
  );
}

function StatusBar() {
  return (
    <div className="absolute inset-x-0 top-[66px] flex h-[60px] items-center justify-between pr-[122px] pl-[146px] text-white">
      <div className="flex items-center gap-4">
        <span className="text-[54px] leading-none font-bold">12:35</span>
        <svg viewBox="0 0 36 38" className="h-[38px] w-[36px]" fill="currentColor" aria-hidden="true">
          <circle cx="18" cy="9" r="8" />
          <path d="M0 36C0 26 8 20 18 20s18 6 18 16c0 1-1 2-2 2H2c-1 0-2-1-2-2Z" />
        </svg>
      </div>
      <div className="flex items-center gap-[22px]" aria-hidden="true">
        <svg viewBox="0 0 66 42" className="h-[42px] w-[66px]" fill="currentColor">
          <rect x="0" y="26" width="11" height="16" rx="3" />
          <rect x="18" y="18" width="11" height="24" rx="3" />
          <rect x="36" y="9" width="11" height="33" rx="3" />
          <rect x="54" y="0" width="11" height="42" rx="3" opacity="0.4" />
        </svg>
        <svg viewBox="0 0 58 42" className="h-[42px] w-[58px]" fill="none" stroke="currentColor" strokeWidth="8">
          <path d="M3 15Q29-7 55 15" />
          <path d="M12 26Q29 11 46 26" />
          <path d="M20 32Q29 24 38 32L29 41Z" fill="currentColor" stroke="none" />
        </svg>
        <svg viewBox="0 0 92 46" className="h-[46px] w-[92px]" fill="currentColor">
          <rect width="82" height="46" rx="14" opacity="0.45" />
          <path d="M14 0H33V16H14L20 22 26 32 20 46H14A14 14 0 0 1 0 32V14A14 14 0 0 1 14 0Z" />
          <path d="M85 16Q91 18 91 23T85 30Z" opacity="0.5" />
        </svg>
      </div>
    </div>
  );
}

export default function App() {
  return (
    <div className="relative flex min-h-screen flex-col bg-[#f8faf9] font-[Inter,sans-serif]">
      <main className="flex flex-1 flex-col px-12 pt-12">
        <header className="flex items-center gap-6">
          <MdError className="size-[72px] shrink-0 text-[#dc2626]" />
          <p className="flex-1 text-[48px] leading-[57px] font-medium text-[#1b4332]">
            {alert.species}
          </p>
          <time className="shrink-0 text-[42px] leading-[50px] font-medium text-[#6b7280]">
            {alert.time}
          </time>
        </header>

        <h1 className="mt-12 text-[70px] leading-[86px] font-extrabold text-[#1f2937]">
          {alert.title}
        </h1>

        <p className="mt-12 text-[47px] leading-[72px] font-medium text-[#1f2937]">
          {alert.message}
        </p>

        <p className="mt-12 text-[42px] leading-[50px] font-medium text-[#2d6a4f]">
          {alert.county}
        </p>

        <section className="relative mt-12 h-[900px] overflow-hidden rounded-[36px]">
          <AlertMap />
          <div className="absolute bottom-5 left-7 flex items-center gap-7 text-white">
            <span className="flex items-center text-[46px] leading-[56px] font-semibold">
              <FaApple className="size-[38px]" />
              Maps
            </span>
            <a href="#legal" className="text-[29px] font-bold text-[#8ab0ae] underline">
              Legal
            </a>
          </div>
        </section>

        <div className="mt-[72px] flex flex-col gap-9">
          <button
            type="button"
            className="flex h-[150px] items-center justify-center gap-6 rounded-3xl border-3 border-[#1b4332] bg-white text-[48px] font-extrabold text-[#1b4332]"
          >
            <MdArrowBack className="size-[72px]" />
            Back to Alerts
          </button>
          <button
            type="button"
            className="flex h-36 items-center justify-center gap-6 rounded-3xl bg-[#1b4332] text-[48px] font-extrabold text-white"
          >
            <MdDashboard className="size-[72px]" />
            Return to Dashboard
          </button>
        </div>
      </main>

      <StatusBar />

      <div className="mx-auto mb-6 h-[15px] w-[471px] rounded-full bg-black" />
    </div>
  );
}
